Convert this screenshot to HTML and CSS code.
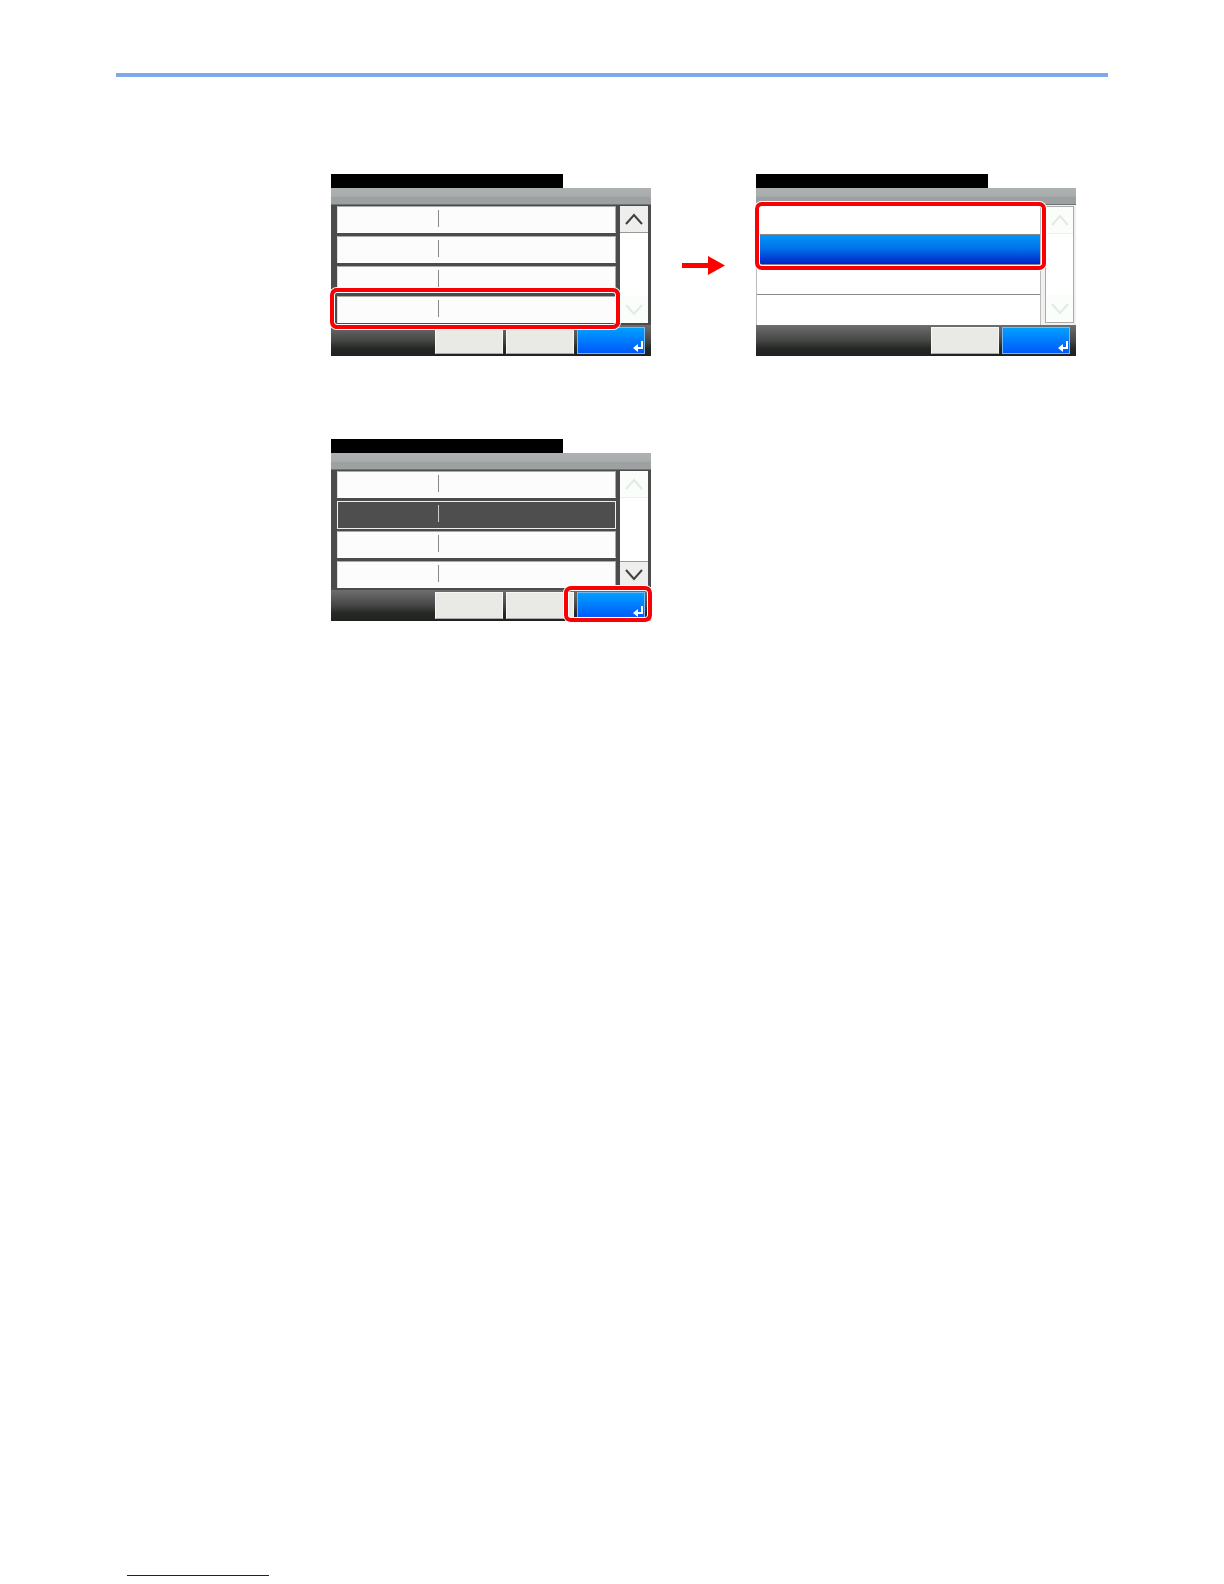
FILE: index.html
```html
<!DOCTYPE html>
<html lang="en">
<head>
<meta charset="utf-8">
<title>Touch panel steps</title>
<link rel="stylesheet" href="styles.css">
</head>
<body>
<svg class="defs" aria-hidden="true">
  <symbol id="up" viewBox="0 0 18 12"><path d="M1 11 9 2l8 9" fill="none" stroke="currentColor" stroke-width="2"/></symbol>
  <symbol id="down" viewBox="0 0 18 12"><path d="M1 1l8 9 8-9" fill="none" stroke="currentColor" stroke-width="2"/></symbol>
  <symbol id="enter" viewBox="0 0 10 11"><path d="M9 0V7H4" fill="none" stroke="currentColor" stroke-width="2"/><path d="M0 7l5-4v8z" fill="currentColor"/></symbol>
</svg>
<header class="rule"></header>
<main class="steps">
  <div class="step">
    <section class="screen">
      <div class="status"></div>
      <div class="title"></div>
      <div class="body">
        <div class="rows">
          <button class="row" aria-label="Item 1"></button>
          <button class="row" aria-label="Item 2"></button>
          <button class="row" aria-label="Item 3"></button>
          <button class="row" aria-label="Item 4"></button>
        </div>
        <div class="scroll">
          <button class="arrow" aria-label="Up"><svg><use href="#up"/></svg></button>
          <button class="arrow" aria-label="Down" disabled><svg><use href="#down"/></svg></button>
        </div>
      </div>
      <div class="footer">
        <button class="key" aria-label="Cancel"></button>
        <button class="key" aria-label="Back"></button>
        <button class="key primary" aria-label="OK"><svg><use href="#enter"/></svg></button>
      </div>
      <span class="mark mark-row"></span>
    </section>
    <svg class="next" viewBox="0 0 43 19" aria-hidden="true"><path d="M0 7h26V0l17 9.500L26 19v-7H0z" fill="#fe0000"/></svg>
    <section class="screen">
      <div class="status"></div>
      <div class="title"></div>
      <div class="body light">
        <div class="rows">
          <button class="option" aria-label="Option 1"></button>
          <button class="option selected" aria-label="Option 2"></button>
          <button class="option" aria-label="Option 3"></button>
          <button class="option" aria-label="Option 4"></button>
        </div>
        <div class="scroll">
          <button class="arrow" aria-label="Up" disabled><svg><use href="#up"/></svg></button>
          <button class="arrow" aria-label="Down" disabled><svg><use href="#down"/></svg></button>
        </div>
      </div>
      <div class="footer">
        <button class="key" aria-label="Cancel"></button>
        <button class="key primary" aria-label="OK"><svg><use href="#enter"/></svg></button>
      </div>
      <span class="mark mark-options"></span>
    </section>
  </div>
  <div class="step">
    <section class="screen">
      <div class="status"></div>
      <div class="title"></div>
      <div class="body">
        <div class="rows">
          <button class="row" aria-label="Item 1"></button>
          <button class="row dark" aria-label="Item 2"></button>
          <button class="row" aria-label="Item 3"></button>
          <button class="row" aria-label="Item 4"></button>
        </div>
        <div class="scroll">
          <button class="arrow" aria-label="Up" disabled><svg><use href="#up"/></svg></button>
          <button class="arrow" aria-label="Down"><svg><use href="#down"/></svg></button>
        </div>
      </div>
      <div class="footer">
        <button class="key" aria-label="Cancel"></button>
        <button class="key" aria-label="Back"></button>
        <button class="key primary" aria-label="OK"><svg><use href="#enter"/></svg></button>
      </div>
      <span class="mark mark-ok"></span>
    </section>
  </div>
</main>
<footer><a class="source" href="#" aria-label="Source"></a></footer>
</body>
</html>
```
FILE: styles.css
```css
* { box-sizing: border-box; }
body {
  margin: 0;
  padding: 73px 116px 8px;
  min-height: 100vh;
  display: flex;
  flex-direction: column;
  background: #fff;
  font-family: "Liberation Sans", Arial, sans-serif;
}
button { display: block; margin: 0; padding: 0; border: 0; border-radius: 0; }
svg { display: block; }
.defs { position: absolute; width: 0; height: 0; }
.rule { height: 4px; background: #80a9ea; }
.steps {
  flex: 1;
  padding: 97px 0 0 215px;
  display: flex;
  flex-direction: column;
  gap: 83px;
}
.step { display: flex; align-items: center; }
.screen { position: relative; width: 320px; flex: none; }
.next { width: 43px; height: 19px; flex: none; margin: 0 31px; }

.status { width: 232px; height: 14px; background: #000; }
.title {
  height: 17px;
  background: linear-gradient(#adb1b1, #a9adad 50%, #9ca0a0 60%, #9da1a1);
  border-bottom: 1px solid #707373;
}
.body {
  height: 120px;
  display: flex;
  gap: 4px;
  padding: 1px 3px 2px 6px;
  background: #4b4b4b;
}
.rows { flex: 1; display: flex; flex-direction: column; gap: 3px; }
.row {
  display: flex;
  align-items: flex-start;
  height: 27px;
  padding: 3px 0 0 100px;
  background: #fcfcfc;
  border: 1px solid #aaa;
  border-left-color: #ddd;
  border-bottom-color: #fff;
}
.row::before { content: ""; width: 1px; height: 17px; background: #888; }
.row.dark { height: 28px; margin-bottom: -1px; background: #4e4e4e; border-color: #eee; }
.row.dark::before { background: #ccc; }

.scroll {
  width: 28px;
  display: flex;
  flex-direction: column;
  justify-content: space-between;
  background: #fff;
}
.arrow {
  height: 27px;
  display: grid;
  place-items: center;
  background: #eeeeec;
  color: #3f403f;
  border-bottom: 1px solid #999;
}
.arrow:last-child { border-top: 1px solid #999; border-bottom: 0; }
.arrow svg { width: 18px; height: 12px; }
.arrow:disabled { background: #fafdfa; color: #e2ebe2; border-color: #edf1ed; }
.arrow:last-child:disabled { border-color: #fafdfa; }

.body.light { background: #f0f0f0; padding: 0 2px 0 0; border-left: 1px solid #bbb; }
.light .rows { gap: 0; border-right: 1px solid #bbb; }
.light .scroll { width: 29px; margin: 1px 0 2px; border: 1px solid #aaa; }
.option { height: 30px; background: #fff; border-bottom: 1px solid #888; }
.option:last-child { border-bottom: 0; }
.option.selected { margin-left: 2px; background: linear-gradient(#0096fc, #006ee6 50%, #0022cc); }

.footer {
  height: 31px;
  display: flex;
  justify-content: flex-end;
  gap: 3px;
  padding: 2px 6px 2px 0;
  background: linear-gradient(#6e6e6e, #454645 50%, #252825 75%, #1f221f);
}
.key { width: 68px; height: 27px; background: #e9e9e6; border: 1px solid #f7f7f5; border-bottom-color: #aaa; }
.key.primary {
  display: flex;
  align-items: flex-end;
  justify-content: flex-end;
  padding: 0 1px 1px 0;
  color: #fff;
  background: linear-gradient(#00a0ff, #0058fa);
  border-color: #77b8f5;
}
.key svg { width: 10px; height: 11px; }

/* Red call-out frames drawn over the panels */
.mark {
  position: absolute;
  border: 4px solid #f80004;
  border-radius: 7px;
  box-shadow: 0 0 0 1px #fff, inset 0 0 0 1px #fff;
}
.mark-row { left: -1px; top: 114px; width: 290px; height: 41px; }
.mark-options { left: -1px; top: 28px; width: 291px; height: 68px; }
.mark-ok { left: 233px; top: 147px; width: 88px; height: 36px; }

.source { display: block; width: 142px; height: 20px; margin-left: 11px; border-bottom: 1px solid #14148c; }
```
